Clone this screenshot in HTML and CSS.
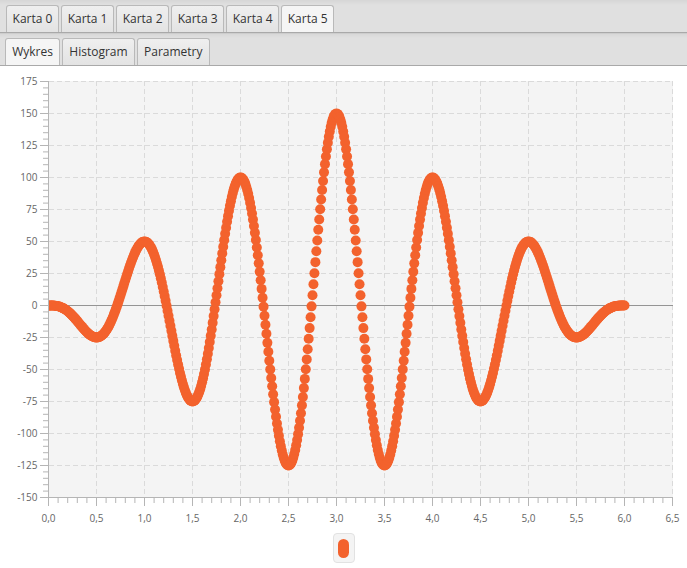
FILE: index.html
```html
<!DOCTYPE html>
<html lang="pl">
<head>
<meta charset="utf-8">
<title>Wykres</title>
<link rel="stylesheet" href="styles.css">
</head>
<body>
<div class="tabbar outer">
  <div class="tab">Karta 0</div>
  <div class="tab">Karta 1</div>
  <div class="tab">Karta 2</div>
  <div class="tab">Karta 3</div>
  <div class="tab">Karta 4</div>
  <div class="tab selected">Karta 5</div>
</div>
<div class="tabbar inner">
  <div class="tab selected">Wykres</div>
  <div class="tab">Histogram</div>
  <div class="tab">Parametry</div>
</div>
<div class="chart">
  <svg class="plot" width="687" height="464" viewBox="0 66 687 464" xmlns="http://www.w3.org/2000/svg">
    <defs>
      <clipPath id="plotclip"><rect x="49" y="81" width="624" height="417"/></clipPath>
    </defs>
    <rect class="plot-bg" x="49" y="81" width="624" height="417"/>
    <g class="grid" id="grid"></g>
    <line class="zero-line" x1="49" y1="305.5" x2="673" y2="305.5"/>
    <g class="series" id="dots" clip-path="url(#plotclip)"></g>
    <g class="axis" id="ticks">
      <line x1="48.5" y1="81" x2="48.5" y2="498"/>
      <line x1="48" y1="497.5" x2="673" y2="497.5"/>
    </g>
    <g class="ylabels">
      <text x="37.5" y="85">175</text>
      <text x="37.5" y="117">150</text>
      <text x="37.5" y="149">125</text>
      <text x="37.5" y="181">100</text>
      <text x="37.5" y="213">75</text>
      <text x="37.5" y="245">50</text>
      <text x="37.5" y="277">25</text>
      <text x="37.5" y="309">0</text>
      <text x="37.5" y="341">-25</text>
      <text x="37.5" y="373">-50</text>
      <text x="37.5" y="405">-75</text>
      <text x="37.5" y="437">-100</text>
      <text x="37.5" y="469">-125</text>
      <text x="37.5" y="501">-150</text>
    </g>
    <g class="xlabels">
      <text x="48.5" y="521.5">0,0</text>
      <text x="96.5" y="521.5">0,5</text>
      <text x="144.5" y="521.5">1,0</text>
      <text x="192.5" y="521.5">1,5</text>
      <text x="240.5" y="521.5">2,0</text>
      <text x="288.5" y="521.5">2,5</text>
      <text x="336.5" y="521.5">3,0</text>
      <text x="384.5" y="521.5">3,5</text>
      <text x="432.5" y="521.5">4,0</text>
      <text x="480.5" y="521.5">4,5</text>
      <text x="528.5" y="521.5">5,0</text>
      <text x="576.5" y="521.5">5,5</text>
      <text x="624.5" y="521.5">6,0</text>
      <text x="672.5" y="521.5">6,5</text>
    </g>
  </svg>
  <div class="legend">
    <div class="legend-box"><span class="legend-symbol"></span></div>
  </div>
</div>
<script src="script.js"></script>
</body>
</html>
```

FILE: styles.css
```css
html, body {
  margin: 0;
  padding: 0;
  background: #ffffff;
}
body {
  width: 687px;
  height: 568px;
  overflow: hidden;
  font-family: "Open Sans", "Noto Sans", sans-serif;
  font-size: 12px;
  color: #333333;
}
.tabbar {
  display: flex;
  align-items: flex-end;
  gap: 2px;
  height: 32px;
  box-sizing: content-box;
  background: linear-gradient(to bottom, #d6d6d6 0px, #e0e0e0 5px, #e0e0e0 100%);
  border-bottom: 1px solid #a9a9a9;
}
.tabbar.outer {
  padding-left: 6px;
}
.tabbar.outer .tab {
  padding: 0 5.6px;
}
.tabbar.inner {
  padding-left: 5px;
  box-shadow: inset 0 1px 0 #cdcdcd;
}
.tabbar.inner .tab {
  padding: 0 6.2px;
}
.tab {
  height: 26px;
  line-height: 25px;
  border: 1px solid #b9b9b9;
  border-bottom: none;
  border-radius: 3px 3px 0 0;
  background: linear-gradient(to bottom, #efefef 0%, #e3e3e3 100%);
  white-space: nowrap;
}
.tab.selected {
  background: #f5f5f5;
}
.chart {
  display: flex;
  flex-direction: column;
}
.plot {
  display: block;
}
.plot-bg {
  fill: #f4f4f4;
}
.grid line {
  stroke: #dadada;
  stroke-width: 1;
  stroke-dasharray: 5 3;
}
.zero-line {
  stroke: #949494;
  stroke-width: 1;
}
.series circle {
  fill: #f3622d;
}
.axis line {
  stroke: #b5b5b5;
  stroke-width: 1;
}
.ylabels text, .xlabels text {
  font-family: "Open Sans", "Noto Sans", sans-serif;
  font-size: 10px;
  fill: #666666;
}
.ylabels text {
  text-anchor: end;
}
.xlabels text {
  text-anchor: middle;
}
.legend {
  display: flex;
  justify-content: center;
  margin-top: 3px;
}
.legend-box {
  width: 22px;
  height: 30px;
  box-sizing: border-box;
  border: 1px solid #e2e2e2;
  border-radius: 4px;
  background: #f4f4f4;
  display: flex;
  align-items: center;
  justify-content: center;
}
.legend-symbol {
  display: block;
  width: 11px;
  height: 19px;
  border-radius: 5.5px;
  background: #f3622d;
}
```

FILE: script.js
```js
(function () {
  var NS = 'http://www.w3.org/2000/svg';
  function X(v) { return 48.5 + v * 96; }
  function Y(v) { return 305.5 - v * 1.28; }
  function line(parent, x1, y1, x2, y2) {
    var l = document.createElementNS(NS, 'line');
    l.setAttribute('x1', x1);
    l.setAttribute('y1', y1);
    l.setAttribute('x2', x2);
    l.setAttribute('y2', y2);
    parent.appendChild(l);
  }
  var grid = document.getElementById('grid');
  var ticks = document.getElementById('ticks');
  var dots = document.getElementById('dots');
  var i, v, x, y;

  for (i = 1; i <= 13; i++) {
    x = X(i * 0.5);
    line(grid, x, 81, x, 498);
  }
  for (v = 175; v > -150; v -= 25) {
    y = Y(v);
    line(grid, 49, y, 673, y);
  }
  for (v = 175; v >= -150; v -= 5) {
    y = Y(v);
    if (v % 25 === 0) {
      line(ticks, 40, y, 48.5, y);
    } else {
      line(ticks, 43, y, 48.5, y);
    }
  }
  for (i = 0; i <= 65; i++) {
    x = X(i / 10);
    if (i % 5 === 0) {
      line(ticks, x, 497.5, x, 506);
    } else {
      line(ticks, x, 497.5, x, 503);
    }
  }
  for (i = 0; i <= 600; i++) {
    v = i / 100;
    var t = 2 * Math.PI * v;
    var f;
    if (v <= 3) {
      f = 50 * v * Math.cos(t) - (25 / Math.PI) * Math.sin(t);
    } else {
      f = 50 * (6 - v) * Math.cos(t) + (25 / Math.PI) * Math.sin(t);
    }
    var c = document.createElementNS(NS, 'circle');
    c.setAttribute('cx', X(v).toFixed(2));
    c.setAttribute('cy', Y(f).toFixed(2));
    c.setAttribute('r', '5');
    dots.appendChild(c);
  }
})();
```
